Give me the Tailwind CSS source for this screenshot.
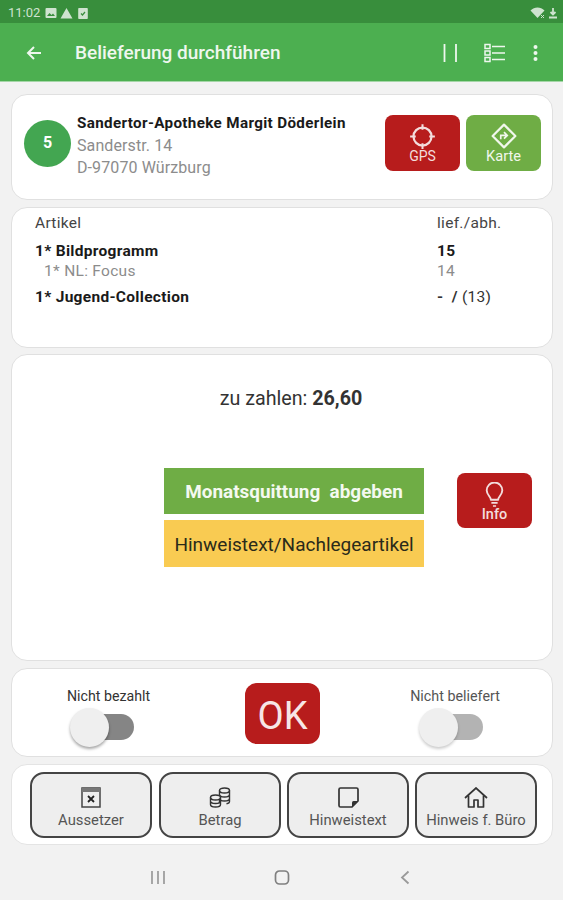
<!DOCTYPE html>
<html lang="de">
<head>
<meta charset="utf-8">
<script src="https://cdn.jsdelivr.net/npm/@tailwindcss/browser@4"></script>
</head>
<body class="bg-[#f2f2f2] font-[Roboto,sans-serif] text-[#222] overflow-hidden">
<div class="w-[563px] h-[900px] flex flex-col">

  <!-- status bar -->
  <div class="h-[23px] bg-[#388e3c] flex items-center justify-between pl-2 pr-[5px] pt-[3px] text-[#cfe3d0]">
    <div class="flex items-center gap-[3px]">
      <span class="text-[13px] mr-[2px]">11:02</span>
      <svg width="12" height="12" viewBox="0 0 12 12"><rect x="0.5" y="1" width="11" height="10" rx="1" fill="currentColor"/><path d="M2 9l2.500-3 2 2 1.500-1.500L10 9z" fill="#388e3c"/></svg>
      <svg width="13" height="12" viewBox="0 0 13 12"><path d="M6.500 1L12.500 11.500H.5z" fill="currentColor"/></svg>
      <svg class="ml-[2px]" width="10" height="12" viewBox="0 0 10 12"><path d="M1 1h8a.8.8 0 0 1 .8.8v9.400a.8.8 0 0 1-.8.8H1a.8.8 0 0 1-.8-.8V1.800A.8.8 0 0 1 1 1z" fill="currentColor"/><path d="M3 6.500l1.500 1.500L7 5" stroke="#388e3c" stroke-width="1.200" fill="none"/></svg>
    </div>
    <div class="flex items-center gap-[3px]">
      <svg width="15" height="12" viewBox="0 0 15 12"><path d="M.5 3.500C4.500-.5 10.500-.5 14.500 3.500L7.500 11z" fill="currentColor"/><path d="M11 8l3 3M14 8l-3 3" stroke="#cfe3d0" stroke-width="1"/></svg>
      <svg width="10" height="12" viewBox="0 0 10 12"><path d="M5 1v6M2.500 5L5 7.500 7.500 5M1 10.500h8" stroke="currentColor" stroke-width="1.800" fill="none"/></svg>
    </div>
  </div>

  <!-- app bar -->
  <div class="h-[59px] bg-[#4caf50] border-b border-[#a5d6a7] flex items-center pt-[2px] text-[#eef7ee]">
    <svg class="ml-[25px]" width="18" height="18" viewBox="0 0 18 18"><path d="M16 9H3M9 3L3 9l6 6" stroke="currentColor" stroke-width="2" fill="none"/></svg>
    <span class="ml-[32px] text-[19px] font-medium">Belieferung durchführen</span>
    <div class="ml-auto flex items-center">
      <svg width="14" height="20" viewBox="0 0 14 20"><path d="M1.500 1v18M13 1v18" stroke="currentColor" stroke-width="1.800"/></svg>
      <svg class="ml-[27px]" width="21" height="20" viewBox="0 0 21 20"><path d="M1 1.500h5v4H1zM1 8h5v4H1zM1 14.500h5v4H1z" fill="none" stroke="currentColor" stroke-width="1.500"/><path d="M8 3.500h13M8 10h13M8 16.500h13" stroke="currentColor" stroke-width="1.600"/></svg>
      <svg class="ml-[28px] mr-[25px]" width="5" height="18" viewBox="0 0 5 18"><circle cx="2.500" cy="3" r="2" fill="currentColor"/><circle cx="2.500" cy="9" r="2" fill="currentColor"/><circle cx="2.500" cy="15" r="2" fill="currentColor"/></svg>
    </div>
  </div>

  <div class="flex-1 flex flex-col pl-[11px] pr-[10px] pt-[12px]">
    <!-- address -->
    <div class="h-[106px] bg-white rounded-[16px] border border-[#e0e0e0] flex items-center pl-[12px] pr-[11px] pb-[8px]">
      <div class="w-[47px] h-[47px] rounded-full bg-[#43a651] text-white font-bold text-[16px] flex items-center justify-center shrink-0">5</div>
      <div class="ml-[6px] mt-[4px] flex flex-col">
        <span class="text-[15.200px] tracking-[0.35px] leading-[23px] font-bold text-[#1a1a1a] whitespace-nowrap">Sandertor-Apotheke Margit Döderlein</span>
        <span class="text-[16px] tracking-[0.1px] leading-[22px] text-[#8c8c8c]">Sanderstr. 14</span>
        <span class="text-[16px] tracking-[0.1px] leading-[22px] text-[#8c8c8c]">D-97070 Würzburg</span>
      </div>
      <div class="ml-auto flex gap-[6px]">
        <div class="w-[75px] h-[56px] rounded-[8px] bg-[#b71c1c] text-[#f3dddd] flex flex-col items-center">
          <svg class="mt-[8px]" width="27" height="27" viewBox="0 0 24 24"><circle cx="12" cy="12" r="8" fill="none" stroke="currentColor" stroke-width="2"/><path d="M12 1v5M12 18v5M1 12h5M18 12h5" stroke="currentColor" stroke-width="1.800"/></svg>
          <span class="text-[14px] leading-[17px] -mt-[2px]">GPS</span>
        </div>
        <div class="w-[75px] h-[56px] rounded-[8px] bg-[#6fad45] text-[#f1f7ec] flex flex-col items-center">
          <svg class="mt-[8px]" width="26" height="26" viewBox="0 0 24 24"><path d="M12 1.500L22.500 12 12 22.500 1.500 12z" fill="none" stroke="currentColor" stroke-width="2" stroke-linejoin="round"/><path d="M9 15v-3.500h5M12 8.500l3 3-3 3" fill="none" stroke="currentColor" stroke-width="1.600"/></svg>
          <span class="text-[14.600px] leading-[17px] -mt-[1px]">Karte</span>
        </div>
      </div>
    </div>

    <!-- articles -->
    <div class="mt-[7px] h-[141px] bg-white rounded-[16px] border border-[#e0e0e0] pl-[23px] pt-[4px] text-[15.500px] tracking-[0.3px]">
      <div class="grid grid-cols-[402px_1fr] leading-[23px]">
        <span class="text-[#444]">Artikel</span><span class="text-[#444]">lief./abh.</span>
        <span class="font-bold text-[#1a1a1a] mt-[5px]">1* Bildprogramm</span><span class="font-bold text-[#1a1a1a] mt-[5px]">15</span>
        <span class="text-[#8c8c8c] pl-[9px] leading-[17px]">1* NL: Focus</span><span class="text-[#8c8c8c] leading-[17px]">14</span>
        <span class="font-bold text-[#1a1a1a] mt-[6px]">1* Jugend-Collection</span><span class="text-[#333] whitespace-pre mt-[6px]"><b>-  /</b> (13)</span>
      </div>
    </div>

    <!-- payment -->
    <div class="mt-[6px] h-[307px] bg-white rounded-[16px] border border-[#e0e0e0] flex flex-col">
      <div class="mt-[32px] pl-[18px] text-center text-[19.700px] leading-[24px] text-[#333]">zu zahlen: <b class="font-bold">26,60</b></div>
      <div class="mt-[57px] ml-[152px] flex items-start">
        <div class="w-[260px] flex flex-col gap-[6px]">
          <div class="h-[46px] pt-[3px] bg-[#6fad45] text-[#f4f9f0] font-bold text-[18.900px] flex items-center justify-center whitespace-pre">Monatsquittung  abgeben</div>
          <div class="h-[47px] pt-[3px] bg-[#f9cb52] text-[#2a2a1a] text-[19px] flex items-center justify-center">Hinweistext/Nachlegeartikel</div>
        </div>
        <div class="ml-[33px] mt-[5px] w-[75px] h-[55px] rounded-[8px] bg-[#b71c1c] text-[#f3dddd] flex flex-col items-center">
          <svg class="mt-[9px]" width="21" height="25" viewBox="0 0 20 24"><path d="M6.500 17c0-3-4-4.500-4-9a7.500 7.500 0 0 1 15 0c0 4.500-4 6-4 9z" fill="none" stroke="currentColor" stroke-width="1.800" stroke-linejoin="round"/><path d="M7 20h6M8.500 23h3" stroke="currentColor" stroke-width="1.600"/></svg>
          <span class="text-[14.500px] font-medium leading-[17px] -mt-[1px]">Info</span>
        </div>
      </div>
    </div>

    <!-- switches -->
    <div class="mt-[7px] h-[89px] bg-white rounded-[16px] border border-[#e0e0e0] flex items-start">
      <div class="w-[193px] flex flex-col items-center pt-[19px]">
        <span class="text-[14.200px] leading-[16px] text-[#333]">Nicht bezahlt</span>
        <div class="w-[64px] h-[40px] mt-[3px] mr-[13px] flex items-center">
          <div class="relative w-[64px] h-[26px]">
            <div class="absolute left-[12px] top-0 w-[52px] h-[26px] rounded-full bg-[#858585]"></div>
            <div class="absolute left-0 -top-[6px] w-[39px] h-[39px] rounded-full bg-[#efefef] shadow-[0_2px_3px_rgba(0,0,0,0.35)]"></div>
          </div>
        </div>
      </div>
      <div class="ml-[40px] mt-[14px] w-[75px] h-[61px] rounded-[12px] bg-[#b71c1c] text-[#f7e6e6] text-[38px] leading-[66px] text-center">OK</div>
      <div class="ml-[48px] w-[174px] flex flex-col items-center pt-[19px]">
        <span class="text-[14.300px] leading-[16px] text-[#555]">Nicht beliefert</span>
        <div class="w-[64px] h-[40px] mt-[3px] mr-[8px] flex items-center">
          <div class="relative w-[64px] h-[26px]">
            <div class="absolute left-[12px] top-0 w-[52px] h-[26px] rounded-full bg-[#b3b3b3]"></div>
            <div class="absolute left-0 -top-[6px] w-[39px] h-[39px] rounded-full bg-[#efefef] shadow-[0_2px_3px_rgba(0,0,0,0.2)]"></div>
          </div>
        </div>
      </div>
    </div>

    <!-- actions -->
    <div class="mt-[7px] h-[81px] bg-white rounded-[16px] border border-[#e4e4e4] flex items-center gap-[6px] pl-[18px]">
      <div class="w-[122px] h-[66px] rounded-[14px] border-2 border-[#444] bg-[#eeeeee] flex flex-col items-center text-[#555]">
        <svg class="mt-[13px]" width="20" height="21" viewBox="0 0 20 21"><rect x="1" y="1" width="18" height="19" fill="none" stroke="#444" stroke-width="1.500"/><rect x="1" y="1" width="18" height="4" fill="#777"/><path d="M7 9l6 6M13 9l-6 6" stroke="#222" stroke-width="1.800"/></svg>
        <span class="text-[14.800px] leading-[18px] mt-[3px]">Aussetzer</span>
      </div>
      <div class="ml-[1px] w-[122px] h-[66px] rounded-[14px] border-2 border-[#444] bg-[#eeeeee] flex flex-col items-center text-[#555]">
        <svg class="mt-[13px]" width="22" height="21" viewBox="0 0 22 21" fill="none" stroke="#333" stroke-width="1.400"><ellipse cx="15.500" cy="3.500" rx="5" ry="2.500"/><path d="M10.500 3.500v12M20.500 3.500v11c0 1.200-1.500 2-3 2.300M10.500 7.500c0 1.500 2 2.500 5 2.500s5-1 5-2.500M10.500 11.500c0 1.500 2 2.500 5 2.500s5-1 5-2.500"/><ellipse cx="6.500" cy="10.500" rx="5" ry="2.500" fill="#eee"/><path d="M1.500 10.500v7c0 1.500 2 2.500 5 2.500s5-1 5-2.500v-7M1.500 14c0 1.500 2 2.500 5 2.500s5-1 5-2.500"/></svg>
        <span class="text-[14.800px] leading-[18px] mt-[3px]">Betrag</span>
      </div>
      <div class="w-[122px] h-[66px] rounded-[14px] border-2 border-[#444] bg-[#eeeeee] flex flex-col items-center text-[#555]">
        <svg class="mt-[13px]" width="21" height="21" viewBox="0 0 21 21"><path d="M14 20H2.500A1.500 1.500 0 0 1 1 18.500v-16A1.500 1.500 0 0 1 2.500 1h16A1.500 1.500 0 0 1 20 2.500V14z" fill="none" stroke="#333" stroke-width="1.700" stroke-linejoin="round"/><path d="M14 20v-4.500a1.500 1.500 0 0 1 1.500-1.500H20z" fill="#333"/></svg>
        <span class="text-[14.800px] leading-[18px] mt-[3px]">Hinweistext</span>
      </div>
      <div class="w-[122px] h-[66px] rounded-[14px] border-2 border-[#444] bg-[#eeeeee] flex flex-col items-center text-[#555]">
        <svg class="mt-[13px]" width="24" height="21" viewBox="0 0 24 21" fill="none" stroke="#333" stroke-width="1.700"><path d="M1 11L12 1l11 10"/><path d="M4.500 8.500V20H10v-7h4v7h5.500V8.500" stroke-linejoin="round"/></svg>
        <span class="text-[14.800px] leading-[18px] mt-[3px]">Hinweis f. Büro</span>
      </div>
    </div>

    <!-- android nav -->
    <div class="flex-1 flex items-center text-[#9a9a9a] pt-[10px]">
      <svg class="ml-[139px]" width="16" height="15" viewBox="0 0 16 15"><path d="M2 1v13M8 1v13M14 1v13" stroke="currentColor" stroke-width="1.700"/></svg>
      <svg class="ml-[108px]" width="16" height="15" viewBox="0 0 16 15"><rect x="1.500" y="1" width="13" height="13" rx="4" fill="none" stroke="#808080" stroke-width="1.700"/></svg>
      <svg class="ml-[110px]" width="10" height="15" viewBox="0 0 10 15"><path d="M8.500 1.500L2 7.500l6.500 6" fill="none" stroke="currentColor" stroke-width="1.800"/></svg>
    </div>
  </div>
</div>
</body>
</html>
